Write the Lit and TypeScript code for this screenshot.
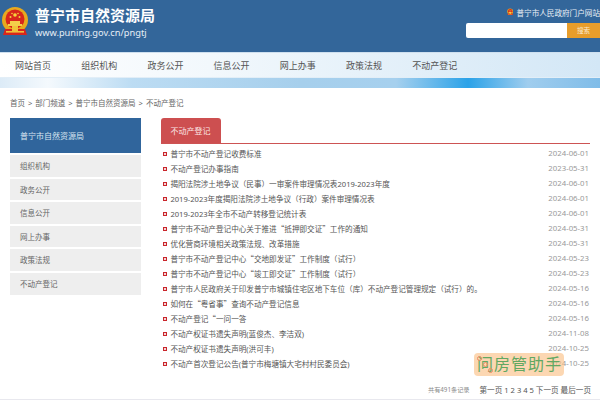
import { LitElement, html, css, svg } from 'lit';
import { customElement } from 'lit/decorators.js';

const NAV = ['网站首页', '组织机构', '政务公开', '信息公开', '网上办事', '政策法规', '不动产登记'];
const SIDE = ['组织机构', '政务公开', '信息公开', '网上办事', '政策法规', '不动产登记'];
const ROWS: [string, string][] = [
  ['普宁市不动产登记收费标准', '2024-06-01'],
  ['不动产登记办事指南', '2023-05-31'],
  ['揭阳法院涉土地争议（民事）一审案件审理情况表2019-2023年度', '2024-06-01'],
  ['2019-2023年度揭阳法院涉土地争议（行政）案件审理情况表', '2024-06-01'],
  ['2019-2023年全市不动产转移登记统计表', '2024-06-01'],
  ['普宁市不动产登记中心关于推进“抵押即交证”工作的通知', '2024-05-31'],
  ['优化营商环境相关政策法规、改革措施', '2024-05-31'],
  ['普宁市不动产登记中心“交地即发证”工作制度（试行）', '2024-05-23'],
  ['普宁市不动产登记中心“竣工即交证”工作制度（试行）', '2024-05-23'],
  ['普宁市人民政府关于印发普宁市城镇住宅区地下车位（库）不动产登记管理规定（试行）的。', '2024-05-16'],
  ['如何在“粤省事”查询不动产登记信息', '2024-05-16'],
  ['不动产登记“一问一答', '2024-05-16'],
  ['不动产权证书遗失声明(蓝俊杰、李洁双)', '2024-11-08'],
  ['不动产权证书遗失声明(洪可丰)', '2024-10-25'],
  ['不动产首次登记公告(普宁市梅塘镇大宅村村民委员会)', '2024-10-25'],
];

// national emblem, used large in the header and small beside the portal link
const emblem = (w: number, h: number) => html`<svg width=${w} height=${h} viewBox="0 0 28 30">
  ${svg`
    <circle cx="14" cy="13" r="13" fill="#e8a91e" />
    <circle cx="14" cy="12" r="9.5" fill="#d8261c" />
    <circle cx="14" cy="8" r="1.8" fill="#f6d23c" />
    <circle cx="9.5" cy="10" r="1" fill="#f6d23c" />
    <circle cx="18.5" cy="10" r="1" fill="#f6d23c" />
    <circle cx="11" cy="6.5" r=".8" fill="#f6d23c" />
    <circle cx="17" cy="6.5" r=".8" fill="#f6d23c" />
    <path d="M7 17h14v2H7zM9 14h10v3H9z" fill="#f4cf4a" />
    <path d="M4 22h20l2 6H2z" fill="#d8261c" />
    <path d="M5 24h18v1.6H5z" fill="#f0c23a" />
    <rect x="11" y="19" width="6" height="5" fill="#f0c23a" />
  `}
</svg>`;

// curly quotes have to come from the CJK face to be full width
const withQuotes = (t: string) =>
  t.split(/([“”])/).map((part) => (part === '“' || part === '”' ? html`<span class="q">${part}</span>` : part));

@customElement('app-root')
export class AppRoot extends LitElement {
  static styles = css`
    :host {
      display: block;
      width: 600px;
      height: 400px;
      overflow: hidden;
      position: relative;
      background: #fff;
      font-family: 'Noto Sans', 'Noto Sans CJK SC', sans-serif;
      color: #555;
    }
    .top {
      height: 52px;
      background: #33669a;
      display: flex;
      justify-content: space-between;
    }
    .brand {
      display: flex;
      align-items: flex-start;
      padding: 7px 0 0 1px;
    }
    .brand-text {
      margin-left: 6px;
      color: #fff;
    }
    .brand-title {
      font-size: 15px;
      line-height: 17px;
      font-weight: 700;
    }
    .brand-url {
      font-size: 9.25px;
      line-height: 14px;
      margin-top: 2px;
      color: #e6eef6;
    }
    .tools {
      width: 134px;
      flex: none;
      padding-top: 7px;
      overflow: hidden;
    }
    .portal {
      display: flex;
      align-items: center;
      height: 10px;
      padding-left: 41px;
      color: #eaf0f6;
      font-size: 7.6px;
      white-space: nowrap;
      gap: 3px;
    }
    .search {
      display: flex;
      margin-top: 6px;
      height: 15px;
    }
    .search-input {
      width: 101px;
      background: #fff;
      border-radius: 2px 0 0 2px;
    }
    .search-btn {
      width: 33px;
      background: #e89d2b;
      color: #fbe9cd;
      font-size: 6.6px;
      line-height: 15px;
      text-align: center;
    }
    .nav {
      height: 24px;
      border-top: 1px solid #cfe0ef;
      border-bottom: 1px solid #e2eef7;
      background: linear-gradient(90deg, #ffffff 0%, #f2f8fc 35%, #d3e7f6 100%);
      display: flex;
      align-items: center;
      gap: 30.2px;
      padding-left: 15px;
      font-size: 9px;
      color: #555;
      white-space: nowrap;
    }
    .band {
      height: 10px;
      background: linear-gradient(
        90deg,
        #dcebf7 0%,
        #f4f9fd 8%,
        #bcdcf3 22%,
        #a6cfec 50%,
        #a6d0ee 66%,
        #2ba2e8 78%,
        #a0cdee 88%,
        #7fbce8 100%
      );
    }
    .crumbs {
      height: 29px;
      padding: 0 0 1px 10px;
      display: flex;
      align-items: center;
      font-size: 7.5px;
      color: #666;
      gap: 3px;
    }
    .main {
      display: flex;
      padding: 0 10px;
      gap: 20px;
    }
    .side {
      width: 130.5px;
      flex: none;
      display: flex;
      flex-direction: column;
      gap: 2px;
    }
    .side-head {
      height: 35px;
      background: #30659c;
      color: #d9e5f0;
      font-size: 8px;
      line-height: 35px;
      padding-left: 10px;
    }
    .side-item {
      height: 21.6px;
      line-height: 23px;
      background: #eeeeee;
      padding-left: 10px;
      font-size: 7.5px;
      color: #666;
    }
    .list {
      flex: 1;
      min-width: 0;
    }
    .tabs {
      height: 25px;
      border-bottom: 1px solid #cd5353;
    }
    .tab {
      width: 60px;
      height: 25px;
      background: #cd4f50;
      border-radius: 3px 3px 0 0;
      color: #fbe6e6;
      font-size: 8px;
      line-height: 25px;
      text-align: center;
    }
    .rows {
      padding-top: 1.5px;
    }
    .row {
      height: 15px;
      display: flex;
      align-items: center;
      font-size: 7.6px;
      color: #555;
      white-space: nowrap;
    }
    .dot {
      width: 2px;
      height: 2px;
      border: 1.3px solid #c9252b;
      background: #f4d5d5;
      margin: 1px 3.4px 0 2.5px;
      flex: none;
    }
    .title {
      flex: 1;
      min-width: 0;
    }
    .q {
      font-family: 'Noto Sans CJK SC', sans-serif;
    }
    .date {
      color: #999;
      font-size: 7.8px;
      margin-right: 1px;
    }
    .pager {
      position: absolute;
      right: 9px;
      bottom: 5px;
      display: flex;
      align-items: center;
      font-size: 7.6px;
      color: #555;
      white-space: nowrap;
      gap: 10px;
    }
    .total {
      font-size: 6.2px;
      color: #888;
    }
    .rule {
      position: absolute;
      left: 0;
      right: 0;
      bottom: 0;
      height: 1px;
      background: #e8e8ee;
    }
    .mark {
      position: absolute;
      left: 474px;
      top: 353px;
      width: 90px;
      height: 23px;
      border-radius: 4px;
      background: rgba(250, 190, 130, 0.62);
      color: #62a862;
      font-size: 16px;
      line-height: 22px;
      padding-left: 3px;
      box-sizing: border-box;
      white-space: nowrap;
      letter-spacing: 1px;
    }
    .ring {
      position: absolute;
      width: 3px;
      height: 3px;
      border: 1px solid #ec8a62;
      border-radius: 50%;
    }
    .r1 {
      left: 2.5px;
      top: 2.5px;
    }
    .r2 {
      left: 8.5px;
      top: 8.5px;
    }
    .r3 {
      left: 13.5px;
      top: 14.5px;
    }
  `;

  render() {
    return html`
      <div class="top">
        <div class="brand">
          ${emblem(28, 30)}
          <div class="brand-text">
            <div class="brand-title">普宁市自然资源局</div>
            <div class="brand-url">www.puning.gov.cn/pngtj</div>
          </div>
        </div>
        <div class="tools">
          <div class="portal">${emblem(9, 10)}<span>普宁市人民政府门户网站</span></div>
          <div class="search">
            <div class="search-input"></div>
            <div class="search-btn">搜索</div>
          </div>
        </div>
      </div>
      <div class="nav">${NAV.map((n) => html`<span>${n}</span>`)}</div>
      <div class="band"></div>
      <div class="crumbs">
        <span>首页</span><span>&gt;</span><span>部门频道</span><span>&gt;</span>
        <span>普宁市自然资源局</span><span>&gt;</span><span>不动产登记</span>
      </div>
      <div class="main">
        <div class="side">
          <div class="side-head">普宁市自然资源局</div>
          ${SIDE.map((s) => html`<div class="side-item">${s}</div>`)}
        </div>
        <div class="list">
          <div class="tabs"><div class="tab">不动产登记</div></div>
          <div class="rows">
            ${ROWS.map(
              ([t, d]) => html`<div class="row">
                <span class="dot"></span><span class="title">${withQuotes(t)}</span><span class="date">${d}</span>
              </div>`
            )}
          </div>
        </div>
      </div>
      <div class="pager">
        <span class="total">共有491条记录</span>
        <span>第一页 1 2 3 4 5 下一页 最后一页</span>
      </div>
      <div class="rule"></div>
      <div class="mark">
        问房管助手
        <span class="ring r1"></span>
        <span class="ring r2"></span>
        <span class="ring r3"></span>
      </div>
    `;
  }
}
